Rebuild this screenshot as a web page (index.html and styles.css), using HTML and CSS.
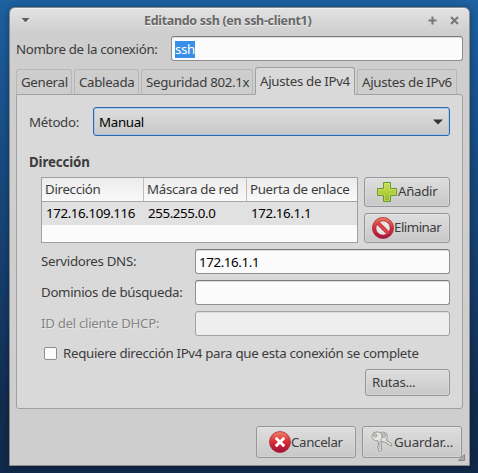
FILE: index.html
```html
<!DOCTYPE html>
<html lang="es">
<head>
<meta charset="utf-8">
<title>Editando ssh (en ssh-client1)</title>
<link rel="stylesheet" href="styles.css">
</head>
<body>
<main class="window">
  <header class="titlebar">
    <svg class="tb-menu" width="9" height="6" viewBox="0 0 9 6"><path d="M0 1h9L4.500 5.500z" fill="#fff" opacity=".6"/><path d="M.5 0h8L4.500 4.500z" fill="#5f5f5f"/></svg>
    <h1>Editando ssh (en ssh-client1)</h1>
    <svg class="tb-max" width="9" height="9" viewBox="0 0 9 9"><path d="M4.500 .5v8M.5 4.500h8" stroke="#777" stroke-width="2"/></svg>
    <svg class="tb-close" width="9" height="9" viewBox="0 0 9 9"><path d="M1 1l7 7M8 1l-7 7" stroke="#777" stroke-width="2"/></svg>
  </header>
  <div class="name-row">
    <label>Nombre de la conexión:</label>
    <div class="entry"><span class="selected">ssh</span></div>
  </div>
  <nav class="tabs">
    <div class="tab t1">General</div>
    <div class="tab t2">Cableada</div>
    <div class="tab t3">Seguridad 802.1x</div>
    <div class="tab t4 active">Ajustes de IPv4</div>
    <div class="tab t5">Ajustes de IPv6</div>
  </nav>
  <section class="panel">
    <div class="method">
      <label>Método:</label>
      <div class="combo"><span>Manual</span><svg width="10" height="6" viewBox="0 0 10 6"><path d="M0 .5h10L5 5.500z" fill="#333"/></svg></div>
    </div>
    <h2>Dirección</h2>
    <div class="addresses">
      <div class="table">
        <div class="row head"><span>Dirección</span><span>Máscara de red</span><span>Puerta de enlace</span></div>
        <div class="row data"><span>172.16.109.116</span><span>255.255.0.0</span><span>172.16.1.1</span></div>
      </div>
      <div class="actions">
        <div class="button add">
          <svg width="20" height="20" viewBox="0 0 20 20"><defs><linearGradient id="g" x2="0" y2="1"><stop stop-color="#c5e04c"/><stop offset=".5" stop-color="#b4cf3c"/><stop offset="1" stop-color="#8fb52a"/></linearGradient></defs><path d="M6.500 .5h7v6h6v7h-6v6h-7v-6h-6v-7h6z" fill="url(#g)" stroke="#679a28"/><path d="M7.500 1.500h5v6h6v5h-6v6h-5v-6h-6v-5h6z" fill="none" stroke="#d8ea86" opacity=".45"/></svg>
          <span>Añadir</span>
        </div>
        <div class="button remove">
          <svg width="22" height="22" viewBox="0 0 22 22"><defs><linearGradient id="r" x2="0" y2="1"><stop stop-color="#ef7a5c"/><stop offset=".5" stop-color="#d5303a"/><stop offset="1" stop-color="#a51240"/></linearGradient></defs><circle cx="11" cy="11" r="10.600" fill="url(#r)" stroke="#a32a34" stroke-width=".7"/><circle cx="11" cy="11" r="7.200" fill="#e9e5e5" stroke="#a6263a" stroke-width=".8"/><path d="M5.800 5.800l10.400 10.400" stroke="#b12a38" stroke-width="4"/><path d="M5.500 5.500l11 11" stroke="#dc4545" stroke-width="2.800"/></svg>
          <span>Eliminar</span>
        </div>
      </div>
    </div>
    <div class="fields">
      <label>Servidores DNS:</label><div class="entry address">172.16.1.1</div>
      <label>Dominios de búsqueda:</label><div class="entry"></div>
      <label class="disabled">ID del cliente DHCP:</label><div class="entry off"></div>
    </div>
    <div class="check"><i></i><span>Requiere dirección IPv4 para que esta conexión se complete</span></div>
    <div class="button routes"><span>Rutas...</span></div>
  </section>
  <footer>
    <div class="button cancel">
      <svg width="22" height="22" viewBox="0 0 22 22"><defs><linearGradient id="c" x2="0" y2="1"><stop stop-color="#f08468"/><stop offset=".45" stop-color="#dd3038"/><stop offset="1" stop-color="#a0103c"/></linearGradient></defs><circle cx="11" cy="11" r="10.500" fill="url(#c)" stroke="#a42b3a" stroke-width=".8"/><path d="M7.700 7.700l6.600 6.600M14.300 7.700l-6.600 6.600" stroke="#fff" stroke-width="2.800" stroke-linecap="square"/></svg>
      <span>Cancelar</span>
    </div>
    <div class="button save">
      <svg width="22" height="22" viewBox="0 0 22 22"><g stroke="#8b8b87" stroke-width=".9" fill="#e5e5e1" stroke-linejoin="round"><path d="M9.500 2C11.500 .6 15 1 16 4c.6 2-.2 4-1 5l5.500 3.500.3 2.500-2.300-.5-1-1.500-1.500.2-.7-1.700-2.300-.5C10 11 8 9 8 6z"/><path d="M2 2.500C4 .3 9 .5 10.500 3c1 2 .8 4.200-.5 5.500l.5 10.500-1.500 1.500-2.200-1.700 1-1.300-1.300-1.500 1.200-1.500L7 9.800C4 10 1 8.500 1 5.500z"/></g><circle cx="4.300" cy="4.500" r="1.600" fill="#cbcbcb" stroke="#8b8b87" stroke-width=".8"/><circle cx="12.800" cy="4.600" r="1.800" fill="#cbcbcb" stroke="#8b8b87" stroke-width=".8"/><path d="M8.700 10v8" stroke="#aaa" stroke-width=".8"/></svg>
      <span>Guardar...</span>
    </div>
    <svg class="grip" width="7" height="7" viewBox="0 0 7 7"><path d="M6.500 .5v6h-6z" fill="#aaa" stroke="#888"/></svg>
  </footer>
</main>
</body>
</html>
```
FILE: styles.css
```css
* { box-sizing: border-box; }
body {
  margin: 0;
  width: 478px;
  height: 473px;
  overflow: hidden;
  padding: 7px 8px 7px 9px;
  background: linear-gradient(#1d61a0 0%, #1b5896 12%, #174b80 35%, #153d6b 60%, #122c50 85%, #11294b 100%);
  font: 13.3px/18px "Noto Sans", sans-serif;
  letter-spacing: -.32px;
  color: #3c3c3c;
  white-space: nowrap;
}
h1, h2 { margin: 0; }
svg { display: block; flex: none; }
.window {
  width: 461px;
  height: 459px;
  display: flex;
  flex-direction: column;
  border: 1px solid #8b8b8b;
  border-radius: 6px 6px 0 0;
  background: linear-gradient(#e2e2e2, #cecece 26px);
  box-shadow: inset 0 1px #f3f3f3, 0 1px 7px rgba(0, 0, 0, .35);
}
.titlebar {
  height: 28px;
  display: flex;
  align-items: center;
  padding: 0 10px 3px 11px;
}
.titlebar h1 {
  flex: 1;
  margin-left: 114px;
  font-size: 12.5px;
  line-height: 18px;
  color: #686868;
  text-shadow: 0 1px #eee;
}
.tb-max { margin-right: 13px; }
.name-row { display: flex; height: 25px; padding-left: 6px; align-items: center; }
.name-row label { width: 155px; }
.entry {
  width: 255px;
  height: 25px;
  padding: 3px 3px;
  border: 1px solid #8f8f8f;
  border-top-color: #7b7b7b;
  border-radius: 3px;
  background: #fbfbfb;
  box-shadow: inset 0 1px #dcdcdc;
  line-height: 18px;
  color: #000;
}
.name-row .entry { width: 292px; }
.selected { display: inline-block; height: 17px; line-height: 17px; background: #398ee7; color: #fff; }
.tabs { display: flex; align-items: flex-end; gap: 2px; height: 34px; margin: 0 6px -1px; position: relative; }
.tab {
  height: 26px;
  padding: 3px 0 0 4px;
  border: 1px solid #b7b7b7;
  border-bottom-color: #a0a0a0;
  border-radius: 3px 3px 0 0;
  background: #cdcdcd;
}
.t1 { width: 56px; }
.t2 { width: 65px; }
.t3 { width: 112px; }
.t4 { width: 100px; }
.t5 { width: 100px; }
.tab.active { height: 28px; padding-top: 4px; border-color: #a0a0a0; border-bottom-color: #d9d9d9; background: #d9d9d9; }
.panel {
  height: 315px;
  margin: 0 6px;
  padding: 12px 12px 0;
  border: 1px solid #a0a0a0;
  border-radius: 0 3px 3px 3px;
  background: #d9d9d9;
}
.method { display: flex; align-items: center; height: 29px; }
.method label { width: 64px; }
.combo {
  width: 357px;
  height: 29px;
  display: flex;
  align-items: center;
  justify-content: space-between;
  padding: 0 6px 0 5px;
  border: 1px solid #2c68b0;
  border-radius: 3px;
  background: linear-gradient(#dedede, #c8c8c8);
  box-shadow: inset 0 0 0 1px #a9c8ea;
  color: #000;
}
h2 { height: 41px; padding-top: 17px; font-size: 13.3px; line-height: 18px; letter-spacing: -.15px; }
.addresses { display: flex; gap: 6px; margin-left: 12px; }
.table { width: 317px; height: 66px; border: 1px solid #a0a0a0; background: #fbfbfb; }
.row { display: grid; grid-template-columns: 102px 103px 1fr; }
.head { height: 24px; border-bottom: 1px solid #a5a5a5; background: linear-gradient(#ebebeb, #fafafa); }
.head span { padding: 2px 0 0 3px; border-right: 1px solid #bdbdbd; }
.head span:last-child { border: 0; }
.data { height: 23px; background: #e1e1e1; color: #000; }
.data span { padding: 2px 0 0 4px; }
.data, .address { letter-spacing: -.38px; }
.actions { display: flex; flex-direction: column; gap: 6px; }
.button {
  display: flex;
  align-items: center;
  border: 1px solid #969696;
  border-radius: 3px;
  background: linear-gradient(#dedede, #c8c8c8);
  box-shadow: inset 0 0 0 1px #dddddd80, inset 0 1px #e8e8e8;
}
.actions .button { width: 86px; height: 30px; }
.add { padding-left: 12px; }
.add span { margin-left: 1px; }
.remove { padding-left: 7px; }
.actions .button span { margin-top: -2px; }
.remove span { letter-spacing: -.5px; }
.fields { display: grid; grid-template-columns: 154px 255px; row-gap: 6px; margin: 6px 0 0 12px; }
.fields label { line-height: 24px; }
.fields .off { background: #eee; border-color: #a3a3a3; }
.disabled { color: #858585; text-shadow: 1px 1px #e7e7e7; }
.check { display: flex; align-items: center; height: 20px; margin: 7px 0 0 15px; }
.check i { width: 13px; height: 13px; margin-right: 6px; border: 1px solid #8d8d8d; border-radius: 2px; background: #fbfbfb; }
.check span { margin-top: -1px; }
.routes { width: 85px; height: 27px; margin: 6px 0 0 336px; padding: 0 0 1px 6px; }
footer { position: relative; display: flex; gap: 6px; padding: 17px 0 0 246px; }
footer .button { width: 100px; height: 32px; }
footer .button span { margin-top: -1px; }
.cancel { padding-left: 12px; }
.save { padding-left: 8px; letter-spacing: -.12px; }
.save span { margin-left: 1px; }
.grip { position: absolute; right: 4px; bottom: -3px; }
```
